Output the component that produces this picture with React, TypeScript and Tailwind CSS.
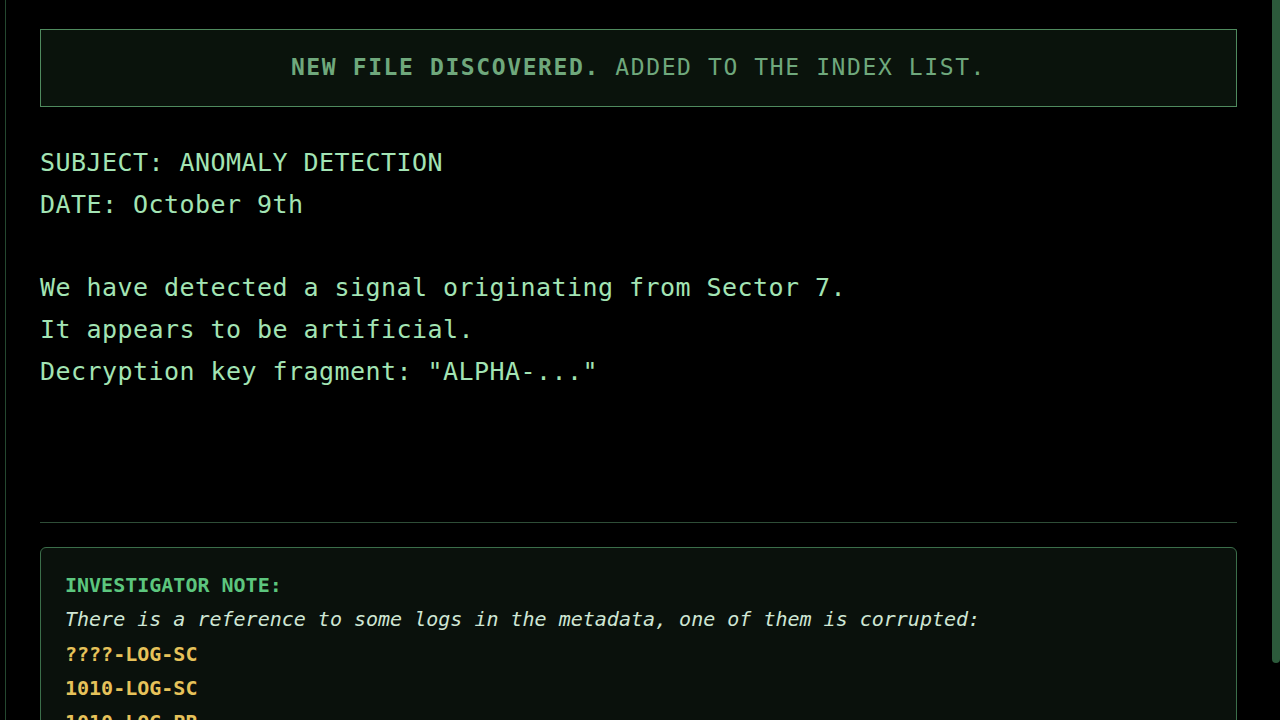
const logs = ["????-LOG-SC", "1010-LOG-SC", "1010-LOG-PR"];

function NoteBox() {
  return (
    <div className="mt-6 rounded-md border border-[#3b6e4a] bg-[#0a110c] px-6 pt-5 pb-6 text-[20px] leading-[34.4px]">
      <p className="font-bold text-[#5cc67e]">INVESTIGATOR NOTE:</p>
      <p className="italic text-[#cfe6d4]">
        There is a reference to some logs in the metadata, one of them is corrupted:
      </p>
      {logs.map((log) => (
        <p key={log} className="font-bold text-[#e6c25a]">
          {log}
        </p>
      ))}
    </div>
  );
}

export default function App() {
  return (
    <div
      className="relative h-screen overflow-hidden bg-black"
      style={{ fontFamily: '"DejaVu Sans Mono", "Liberation Mono", monospace' }}
    >
      <div className="ml-[5px] border-l border-[#24472f] pl-[34px] pr-[43px] pt-[29px] pb-10">
        <div className="flex h-[78px] items-center justify-center border border-[#4f8a5e] bg-[#0a130c] pb-[2px] text-[23px] tracking-[1.6px] text-[#6fa87c]">
          <span className="font-bold">NEW FILE DISCOVERED.</span>
          <span>&nbsp;ADDED TO THE INDEX LIST.</span>
        </div>

        <div className="mt-[35px] whitespace-pre-wrap text-[25px] leading-[41.8px] tracking-[0.45px] text-[#a3e4b4]">
          {`SUBJECT: ANOMALY DETECTION
DATE: October 9th

We have detected a signal originating from Sector 7.
It appears to be artificial.
Decryption key fragment: "ALPHA-..."`}
        </div>

        <hr className="mt-[129px] border-t border-[#2e4d37]" />

        <NoteBox />
      </div>

      {/* scrollbar thumb */}
      <div className="absolute top-0 right-0 h-[663px] w-2 rounded-b-md bg-[#2c5a3b]" />
    </div>
  );
}
